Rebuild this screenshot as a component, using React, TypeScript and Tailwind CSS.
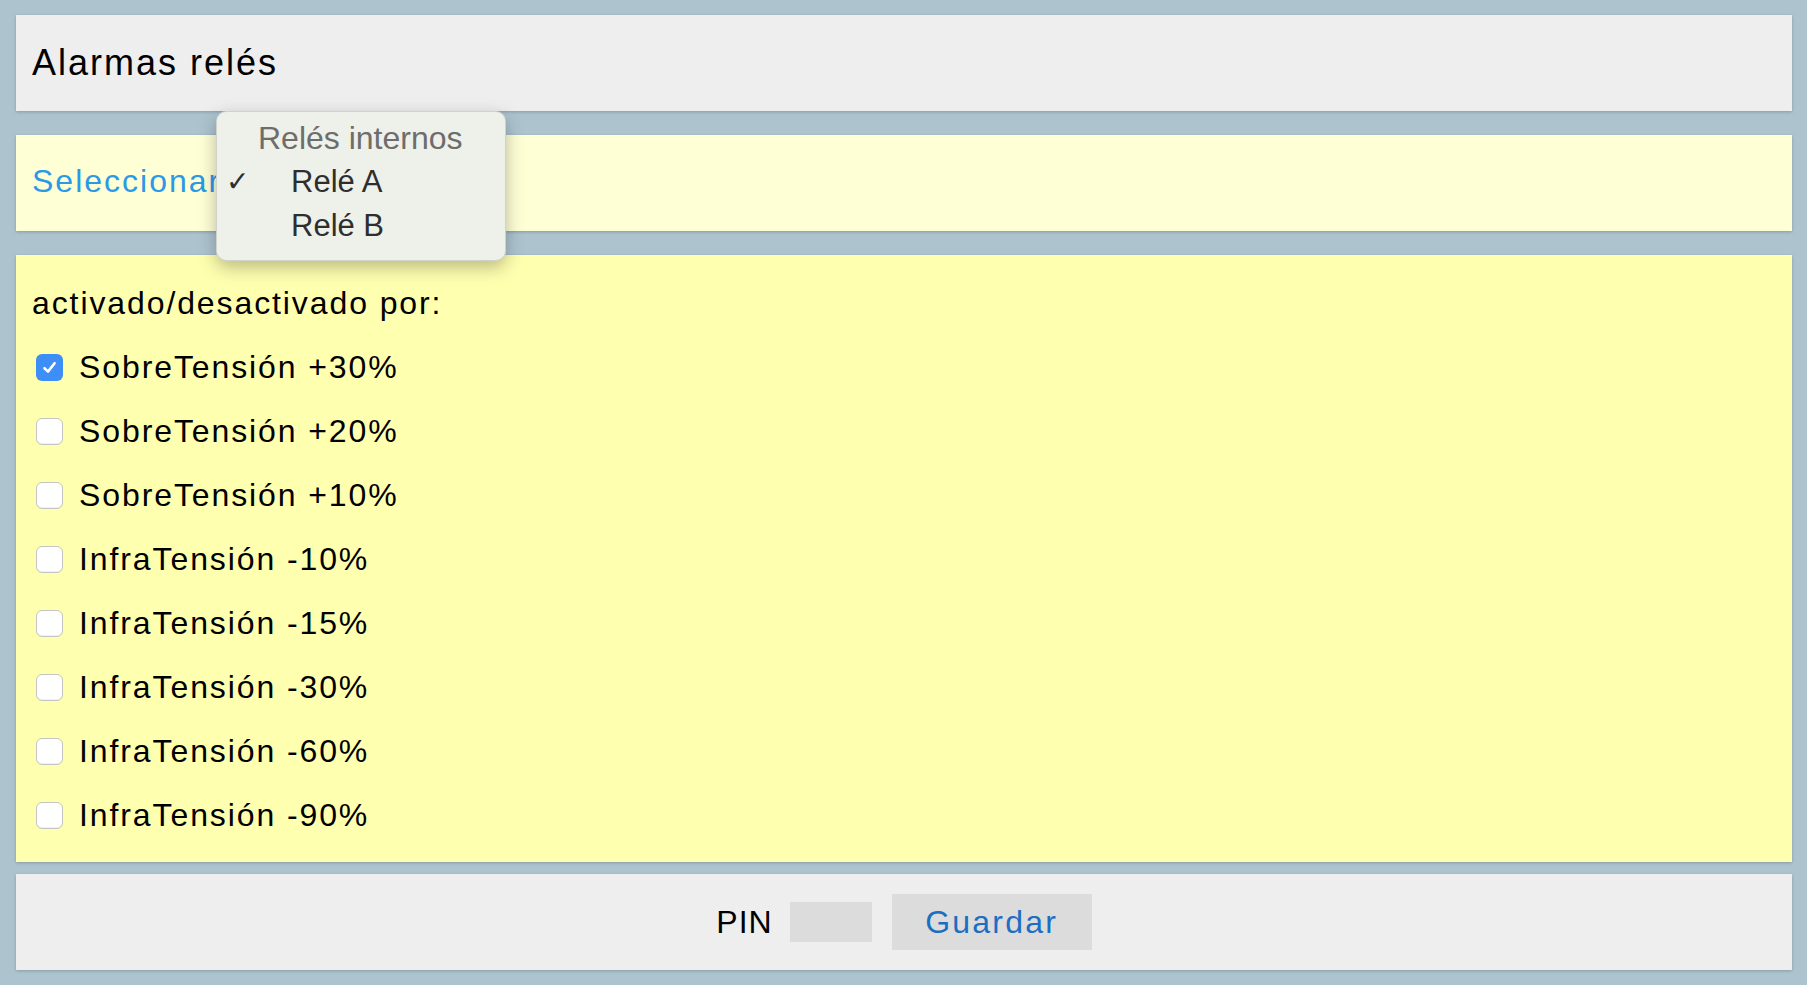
import { useState } from "react";

const options = [
  { label: "SobreTensión +30%", checked: true },
  { label: "SobreTensión +20%", checked: false },
  { label: "SobreTensión +10%", checked: false },
  { label: "InfraTensión -10%", checked: false },
  { label: "InfraTensión -15%", checked: false },
  { label: "InfraTensión -30%", checked: false },
  { label: "InfraTensión -60%", checked: false },
  { label: "InfraTensión -90%", checked: false },
];

function Checkbox({ checked, onChange }: { checked: boolean; onChange: () => void }) {
  return (
    <span
      onClick={onChange}
      className={
        checked
          ? "ml-1 flex h-[27px] w-[27px] shrink-0 items-center justify-center rounded-[6px] bg-[#3d8ef6]"
          : "ml-1 flex h-[27px] w-[27px] shrink-0 items-center justify-center rounded-[6px] border border-[#c4c4c4] bg-white shadow-[inset_0_-1px_1px_rgba(0,0,0,0.06)]"
      }
    >
      {checked && (
        <svg width="17" height="17" viewBox="0 0 17 17" fill="none">
          <path d="M3.5 9.2 L7 12.6 L13.6 4.2" stroke="white" strokeWidth="2.6" strokeLinecap="round" strokeLinejoin="round" />
        </svg>
      )}
    </span>
  );
}

export default function App() {
  const [items, setItems] = useState(options);

  const toggle = (i: number) =>
    setItems((list) => list.map((it, j) => (j === i ? { ...it, checked: !it.checked } : it)));

  return (
    <div className="relative min-h-screen bg-[#adc4cf] pb-[14px] pl-4 pr-[15px] pt-[15px] font-['Liberation_Sans',Arial,sans-serif] text-black">
      <div className="flex h-24 items-center bg-[#eeeeee] px-4 shadow-[0_1px_3px_rgba(0,0,0,0.22)]">
        <h1 className="text-[36px] tracking-[2px]">Alarmas relés</h1>
      </div>

      <div className="mt-6 flex h-24 items-center bg-[#ffffd6] px-4 pb-1 shadow-[0_1px_3px_rgba(0,0,0,0.22)]">
        <span className="text-[32px] tracking-[2px] text-[#2b99e6]">Seleccionar</span>
      </div>

      <div className="mt-6 bg-[#ffffb0] px-4 pb-[15px] pt-4 shadow-[0_1px_3px_rgba(0,0,0,0.22)]">
        <p className="h-16 text-[32px] leading-[64px] tracking-[1.9px]">activado/desactivado por:</p>
        {items.map((it, i) => (
          <label key={it.label} className="flex h-16 items-center gap-4">
            <Checkbox checked={it.checked} onChange={() => toggle(i)} />
            <span className="text-[32px] tracking-[1.9px]">{it.label}</span>
          </label>
        ))}
      </div>

      <div className="mt-3 flex h-24 items-center justify-center bg-[#eeeeee] shadow-[0_1px_3px_rgba(0,0,0,0.22)]">
        <span className="text-[32px] tracking-[1px]">PIN</span>
        <div className="ml-[17px] h-10 w-[82px] bg-[#dcdcdc]" />
        <button className="ml-5 h-14 w-[200px] bg-[#dcdcdc] text-[32px] tracking-[2.2px] text-[#1b6ec2]">
          Guardar
        </button>
      </div>

      <div className="absolute left-[216px] top-[111px] w-[290px] rounded-[10px] border border-[rgba(0,0,0,0.12)] bg-[#eef0ea] pb-[12px] pt-[4px] shadow-[0_6px_18px_rgba(0,0,0,0.28)]">
        <div className="h-11 pl-[41px] text-[32px] leading-[44px] text-[#6d6d6b]">Relés internos</div>
        <div className="flex h-11 items-center text-[31px] leading-[44px] text-[#2e2e2c]">
          <span className="w-[74px] pl-[9px] font-['DejaVu_Sans',sans-serif] text-[28px] font-bold">✓</span>
          <span>Relé A</span>
        </div>
        <div className="flex h-11 items-center text-[31px] leading-[44px] text-[#2e2e2c]">
          <span className="w-[74px]" />
          <span>Relé B</span>
        </div>
      </div>
    </div>
  );
}
